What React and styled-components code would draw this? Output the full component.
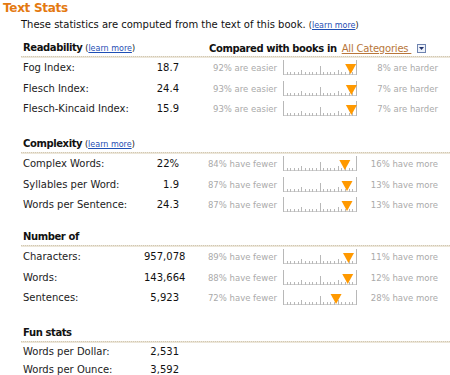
import React from 'react'
import styled, {createGlobalStyle} from 'styled-components'

const GlobalStyle = createGlobalStyle`
  html, body {
    margin: 0;
    padding: 0;
    background: #fff;
  }
  body {
    font-family: "DejaVu Sans", Verdana, sans-serif;
    font-size: 10px;
    color: #222;
  }
`

const Page = styled.div`
  width: 450px;
  height: 375px;
  overflow: hidden;
`

const Title = styled.h2`
  margin: 0;
  padding: 1px 0 0 3px;
  font-size: 12px;
  line-height: 14px;
  font-weight: bold;
  letter-spacing: -0.3px;
  color: #e47911;
`

const Intro = styled.p`
  margin: 4px 0 0 21px;
  line-height: 12px;
  color: #111;
`

const Small = styled.span`
  font-size: 8px;
  letter-spacing: 0;
`

const Link = styled.a`
  color: #1f4fb4;
  text-decoration: underline;
  cursor: pointer;
`

const Section = styled.section`
  margin: ${p => p.$gap}px 0 0 21px;
`

const Header = styled.div`
  display: grid;
  grid-template-columns: 186px auto;
  align-items: center;
  height: 12px;
  line-height: 12px;
  padding: 0 0 2px 2px;
  font-weight: bold;
  letter-spacing: -0.4px;
  color: #111;
`

const HeaderNote = styled.span`
  font-weight: normal;
`

const Compared = styled.div`
  display: flex;
  align-items: center;
  white-space: nowrap;
`

const Category = styled.a`
  margin-left: 5px;
  font-weight: normal;
  letter-spacing: -0.2px;
  color: #b8763a;
  text-decoration: underline;
  cursor: pointer;
`

const DropBox = styled.span`
  margin-left: 6px;
  width: 7px;
  height: 7px;
  border: 1px solid #6f84b0;
  background: #eef2fa;
  display: flex;
  align-items: center;
  justify-content: center;
`

const Rule = styled.div`
  height: 1px;
  border-top: 1px dotted #d2c8b2;
  background: #ece6d9;
`

const Row = styled.div`
  display: grid;
  grid-template-columns: 121px 35px 98px 81px 80px;
  align-items: center;
  height: ${p => p.$short ? 18 : 20.5}px;
  line-height: 12px;
  padding-left: 2px;
  white-space: nowrap;
`

const Label = styled.span`
  color: #222;
`

const Value = styled.span`
  text-align: right;
  color: #111;
`

const Compare = styled.span`
  font-size: 8.5px;
  color: #aaa;
  text-align: right;
`

const ScaleBox = styled.svg`
  margin-left: 6px;
  display: block;
`

function Scale({pct}) {
  const w = 73
  const ticks = []
  for (let i = 0; i <= 20; i++) {
    const x = Math.round(i * w / 20) + 0.5
    let h = 3
    if (i === 0 || i === 20) h = 15
    else if (i === 10) h = 9
    else if (i === 5 || i === 15) h = 5
    ticks.push(<line key={i} x1={x} x2={x} y1={15 - h} y2={15} stroke="#b8b8b8" strokeWidth="1" />)
  }
  const cx = 0.5 + pct / 100 * w
  return (
    <ScaleBox width="75" height="16" viewBox="0 0 75 16">
      <line x1="0" x2={w + 1} y1="14.5" y2="14.5" stroke="#cfcfcf" strokeWidth="1" />
      {ticks}
      <polygon points={`${cx - 5.5},4 ${cx + 5.5},4 ${cx},14`} fill="#ff9900" />
    </ScaleBox>
  )
}

const sections = [
  {
    title: 'Readability',
    gap: 10,
    note: true,
    compared: true,
    rows: [
      ['Fog Index:', '18.7', 92, 'are easier', 8, 'are harder'],
      ['Flesch Index:', '24.4', 93, 'are easier', 7, 'are harder'],
      ['Flesch-Kincaid Index:', '15.9', 93, 'are easier', 7, 'are harder'],
    ],
  },
  {
    title: 'Complexity',
    gap: 18.5,
    note: true,
    rows: [
      ['Complex Words:', '22%', 84, 'have fewer', 16, 'have more'],
      ['Syllables per Word:', '1.9', 87, 'have fewer', 13, 'have more'],
      ['Words per Sentence:', '24.3', 87, 'have fewer', 13, 'have more'],
    ],
  },
  {
    title: 'Number of',
    gap: 15.5,
    rows: [
      ['Characters:', '957,078', 89, 'have fewer', 11, 'have more'],
      ['Words:', '143,664', 88, 'have fewer', 12, 'have more'],
      ['Sentences:', '5,923', 72, 'have fewer', 28, 'have more'],
    ],
  },
  {
    title: 'Fun stats',
    gap: 18.5,
    rows: [
      ['Words per Dollar:', '2,531'],
      ['Words per Ounce:', '3,592'],
    ],
  },
]

export default function App() {
  return (
    <Page>
      <GlobalStyle />
      <Title>Text Stats</Title>
      <Intro>
        These statistics are computed from the text of this book.{' '}
        <Small>(<Link>learn more</Link>)</Small>
      </Intro>
      {sections.map(s => (
        <Section key={s.title} $gap={s.gap}>
          <Header>
            <span>
              {s.title}
              {s.note && (
                <HeaderNote>
                  {' '}<Small>(<Link>learn more</Link>)</Small>
                </HeaderNote>
              )}
            </span>
            {s.compared && (
              <Compared>
                Compared with books in
                <Category>All Categories&nbsp;</Category>
                <DropBox>
                  <svg width="5" height="3" viewBox="0 0 5 3">
                    <polygon points="0,0 5,0 2.5,3" fill="#22336b" />
                  </svg>
                </DropBox>
              </Compared>
            )}
          </Header>
          <Rule />
          {s.rows.map(r => (
            <Row key={r[0]} $short={r.length === 2}>
              <Label>{r[0]}</Label>
              <Value>{r[1]}</Value>
              {r.length > 2 && (
                <>
                  <Compare>{r[2]}% {r[3]}</Compare>
                  <Scale pct={r[2]} />
                  <Compare>{r[4]}% {r[5]}</Compare>
                </>
              )}
            </Row>
          ))}
        </Section>
      ))}
    </Page>
  )
}
